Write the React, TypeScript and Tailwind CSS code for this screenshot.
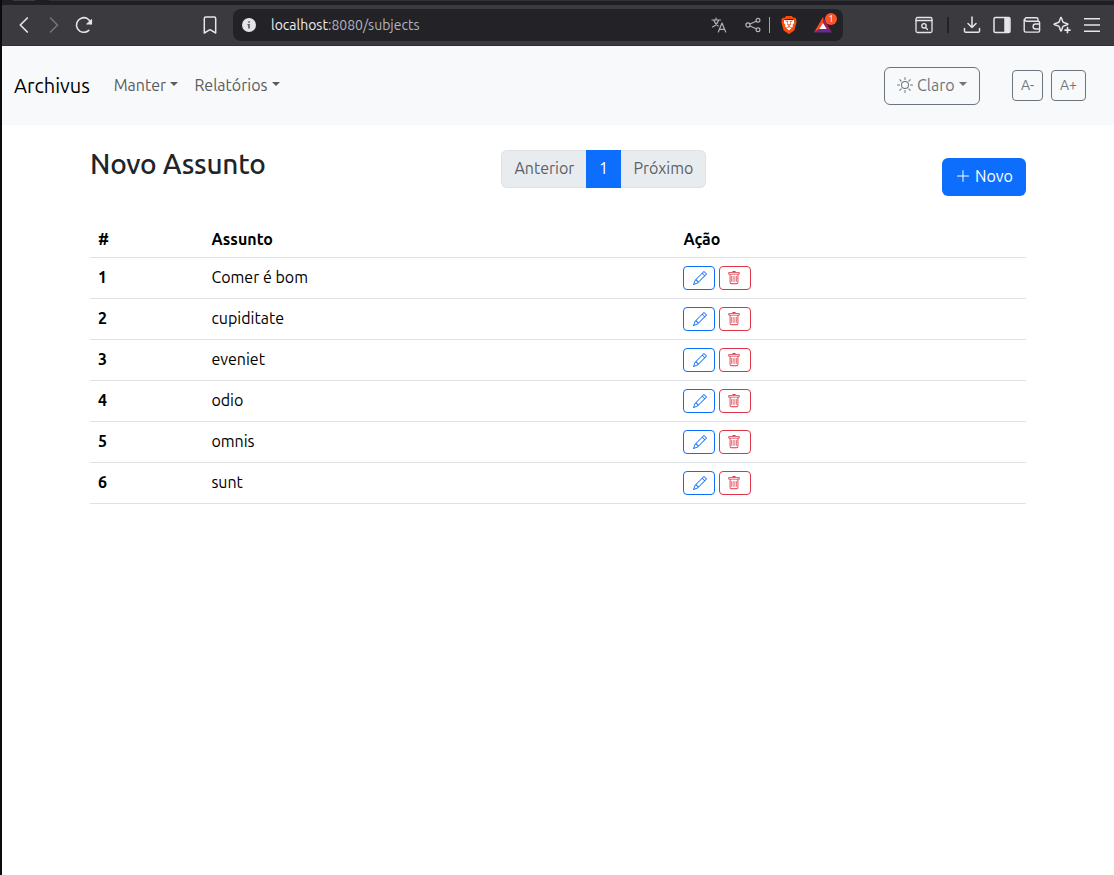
import type { ReactNode } from "react";
import { BsPencil, BsPlusLg, BsSun, BsTrash } from "react-icons/bs";
import { SiBrave } from "react-icons/si";

const subjects = ["Comer é bom", "cupiditate", "eveniet", "odio", "omnis", "sunt"];

function Icon({ children, className = "" }: { children: ReactNode; className?: string }) {
  return (
    <svg
      viewBox="0 0 20 20"
      className={`h-5 w-5 shrink-0 ${className}`}
      fill="none"
      stroke="currentColor"
      strokeWidth="1.5"
      strokeLinecap="round"
      strokeLinejoin="round"
    >
      {children}
    </svg>
  );
}

function Caret() {
  return (
    <span className="ml-[0.255em] inline-block h-0 w-0 border-x-[0.3em] border-t-[0.3em] border-x-transparent border-t-current align-[0.255em]" />
  );
}

function BrowserBar() {
  return (
    <header className="h-[46px] border-b border-[#302f34] bg-[#3b3a3f] text-[#e6e5e9]">
      <div className="flex h-[5px] bg-[#1f1e24]">
        <div className="ml-[11px] h-px w-[22px] bg-[#3b3a3f]" />
        <div className="ml-[14px] h-px flex-1 bg-[#313035]" />
      </div>
      <div className="flex h-10 items-center">
        <Icon className="ml-[12px]">
          <path d="M13.3 3 6.3 10l7 7" strokeWidth="1.7" />
        </Icon>
        <Icon className="ml-[10px] text-[#77767b]">
          <path d="m6.5 3 7 7-7 7" />
        </Icon>
        <Icon className="ml-[10px]">
          <path d="M14.8 15.3A7.3 7.3 0 1 1 17 8.8" strokeWidth="1.6" />
          <path d="M13 9h4.6V4.8Z" fill="currentColor" strokeWidth="1" />
        </Icon>
        <Icon className="ml-[106px]">
          <path d="M4.3 3.4c0-.9.5-1.4 1.4-1.4h8.6c.9 0 1.4.5 1.4 1.4V18L10 14.7 4.3 18Z" />
        </Icon>
        <div className="ml-[13px] flex h-8 w-[610px] items-center rounded-lg bg-[#232227]">
          <svg viewBox="0 0 14 14" className="ml-[9px] h-[14px] w-[14px]">
            <circle cx="7" cy="7" r="7" fill="#e4e3e8" />
            <path d="M6.2 3.3h1.6v1.5H6.2zM5.5 6h2.3v4.5H6.2V7.2h-.7z" fill="#57565b" />
          </svg>
          <span className="ml-[15px] w-[150px] whitespace-nowrap text-[14px] text-[#b5b4b9]">
            <span className="text-[#ececf0]">localhost</span>:8080/subjects
          </span>
          <Icon className="ml-[288px] text-[#b3b2b7]">
            <path d="M3 5h8.5M7 3v2M9.5 5c-.8 3.2-3 5.6-6 7M4.7 5c.8 2.6 2.4 4.5 4.5 6M9.3 17l3.7-9 3.7 9M10.4 14.3h5.2" strokeWidth="1.2" />
          </Icon>
          <Icon className="ml-[14px] text-[#b3b2b7]">
            <g strokeWidth="1.2">
              <circle cx="5" cy="10" r="2.1" />
              <circle cx="15" cy="5.3" r="1.9" />
              <circle cx="15" cy="14.7" r="1.9" />
              <path d="m7 9 6.2-2.8M7 11l6.2 2.8" />
            </g>
          </Icon>
          <div className="ml-[6px] h-4 w-px bg-[#a5a4a9]" />
          <span className="relative ml-[9px] flex h-5 w-5 items-center justify-center">
            <svg viewBox="0 0 20 20" className="absolute h-5 w-5">
              <path d="m5 5 10 0 1 5-6 7-6-7z" fill="#fff" />
            </svg>
            <SiBrave className="relative h-[18px] w-[18px] text-[#fb4c0b]" />
          </span>
          <span className="relative ml-[13px] h-5 w-6">
            <svg viewBox="0 0 24 20" className="h-5 w-6">
              <path d="M11 2 2 17.5l9-5.5z" fill="#ff4724" />
              <path d="m11 2 9 15.500-9-5.500z" fill="#9e1f63" />
              <path d="M2 17.500h18l-5.200-3.500H7.200z" fill="#662d91" />
              <path d="m11 8 3.700 6H7.300z" fill="#fff" />
            </svg>
            <span className="absolute left-[13px] top-[-2px] flex h-3 w-3 items-center justify-center rounded-full bg-[#fb542b] text-[9px] leading-none text-white">
              1
            </span>
          </span>
        </div>
        <Icon className="ml-[71px]">
          <g strokeWidth="1.3">
            <rect x="2" y="2.5" width="16" height="15" rx="1.5" />
            <path d="M2 5.5h16m-4.5 9-2-2" />
            <circle cx="10" cy="10.8" r="2.2" />
          </g>
        </Icon>
        <div className="ml-[13px] h-4 w-[2px] bg-[#222127]" />
        <Icon className="ml-[13px]">
          <path d="M10 2v10.5m-4-4 4 4 4-4M2.5 13.5V16c0 .8.5 1.3 1.3 1.3h12.4c.8 0 1.3-.5 1.3-1.3v-2.5" />
        </Icon>
        <Icon className="ml-[10px]">
          <rect x="2" y="2.5" width="16" height="15" rx="1.5" />
          <path d="M13 3h4v14h-4z" fill="currentColor" />
        </Icon>
        <Icon className="ml-[10px]">
          <path d="M16 6V4.2c0-.9-.6-1.5-1.5-1.5H4a2 2 0 0 0 0 3.5h12.3c.8 0 1.3.5 1.3 1.3v8.3c0 .8-.5 1.3-1.3 1.3H3.7c-.9 0-1.5-.6-1.5-1.5V4.5M17.6 9h-4a2.5 2.5 0 0 0 0 5h4Z" strokeWidth="1.4" />
        </Icon>
        <Icon className="ml-[10px]">
          <path d="M9 2.2c.7 0 1.2 4 2.1 4.9.9.9 4.9 1.4 4.9 2.1s-4 1.2-4.9 2.1c-.9.9-1.4 4.9-2.1 4.9s-1.2-4-2.1-4.9C6 10.4 2 9.9 2 9.2s4-1.2 4.9-2.1C7.8 6.2 8.3 2.2 9 2.2Z" />
          <path d="M15.5 12.6v5m-2.5-2.5h5" strokeWidth="1.7" />
        </Icon>
        <Icon className="ml-[10px]">
          <path d="M2 3.7h16M2 10h16M2 16.3h16" strokeLinecap="butt" />
        </Icon>
      </div>
    </header>
  );
}

function Navbar() {
  return (
    <nav className="flex h-[79px] items-center bg-[#f8f9fa] pl-3 text-[#5b5c5e]">
      <span className="w-[76px] whitespace-nowrap text-[20px] text-black">Archivus</span>
      <a className="ml-[23.7px] w-[65px] whitespace-nowrap pb-[2px]">
        Manter
        <Caret />
      </a>
      <a className="ml-[15.7px] w-[86px] whitespace-nowrap pb-[2px]">
        Relatórios
        <Caret />
      </a>
      <button className="ml-auto h-[38px] w-24 whitespace-nowrap rounded-md border border-[#6c757d] pb-[2px] pl-[12.400px] text-left leading-6 text-[#6c757d]">
        <BsSun className="inline-block h-4 w-4 align-[-0.125em]" /> Claro
        <Caret />
      </button>
      <button className="ml-8 h-[31px] w-[31px] rounded border border-[#6c757d] text-[14px] leading-[21px] text-[#6c757d]">A-</button>
      <button className="ml-2 mr-7 h-[31px] w-[35px] rounded border border-[#6c757d] text-[14px] leading-[21px] text-[#6c757d]">A+</button>
    </nav>
  );
}

function SubjectTable() {
  return (
    <table className="mt-5 w-full table-fixed border-collapse text-left text-black">
      <colgroup>
        <col className="w-[113px]" />
        <col className="w-[472px]" />
        <col />
      </colgroup>
      <thead>
        <tr className="h-[41px] border-b border-[#dee2e6]">
          <th className="px-2 pt-[6px] pb-0 font-bold">#</th>
          <th className="pl-[8.400px] pt-[6px] pb-0 font-bold">Assunto</th>
          <th className="pl-[8.400px] pt-[6px] pb-0 font-bold">Ação</th>
        </tr>
      </thead>
      <tbody>
        {subjects.map((subject, index) => (
          <tr key={subject} className="h-[41px] border-b border-[#dee2e6]">
            <th className="px-2 pt-0 pb-[2px] font-bold">{index + 1}</th>
            <td className="pl-[8.400px] pt-0 pb-[2px]">{subject}</td>
            <td className="px-2 py-0">
              <div className="flex gap-1">
                <button aria-label="Editar" className="flex h-6 w-8 items-center justify-center rounded border border-[#0d6efd] pl-px text-[#0d6efd]">
                  <BsPencil className="h-[14px] w-[14px]" />
                </button>
                <button aria-label="Excluir" className="flex h-6 w-8 items-center justify-center rounded border border-[#dc3545] pr-[2px] text-[#dc3545]">
                  <BsTrash className="h-[14px] w-[14px]" />
                </button>
              </div>
            </td>
          </tr>
        ))}
      </tbody>
    </table>
  );
}

export default function App() {
  return (
    <div className="h-[875px] w-[1114px] overflow-hidden border-l-2 border-[#0b0b0d] bg-white font-[Ubuntu,'Noto_Sans',sans-serif] text-[16px] leading-6">
      <BrowserBar />
      <Navbar />
      <main className="ml-[88px] w-[936px]">
        <div className="flex h-[71px] items-start">
          <h1 className="mt-[22px] w-[411px] whitespace-nowrap text-[28px] font-medium leading-[34px] tracking-[-0.25px] text-[#212529]">
            Novo Assunto
          </h1>
          <div className="mt-[25px] flex h-[38px] w-[205px] text-[#5b6167]">
            <span className="w-[85px] rounded-l-md border border-r-0 border-[#dee2e6] bg-[#e9ecef] py-[5px] pl-[12.400px]">Anterior</span>
            <span className="w-[35px] bg-[#0d6efd] py-[6px] text-center text-white">1</span>
            <span className="w-[85px] rounded-r-md border border-l-0 border-[#dee2e6] bg-[#e9ecef] py-[5px] pl-[12.400px]">Próximo</span>
          </div>
          <button className="ml-auto mt-[33px] h-[38px] w-[84px] whitespace-nowrap rounded-md bg-[#0d6efd] pb-[2px] pl-[13.400px] text-left text-white">
            <BsPlusLg className="inline-block h-4 w-4 align-[-0.125em]" /> Novo
          </button>
        </div>
        <SubjectTable />
      </main>
    </div>
  );
}
